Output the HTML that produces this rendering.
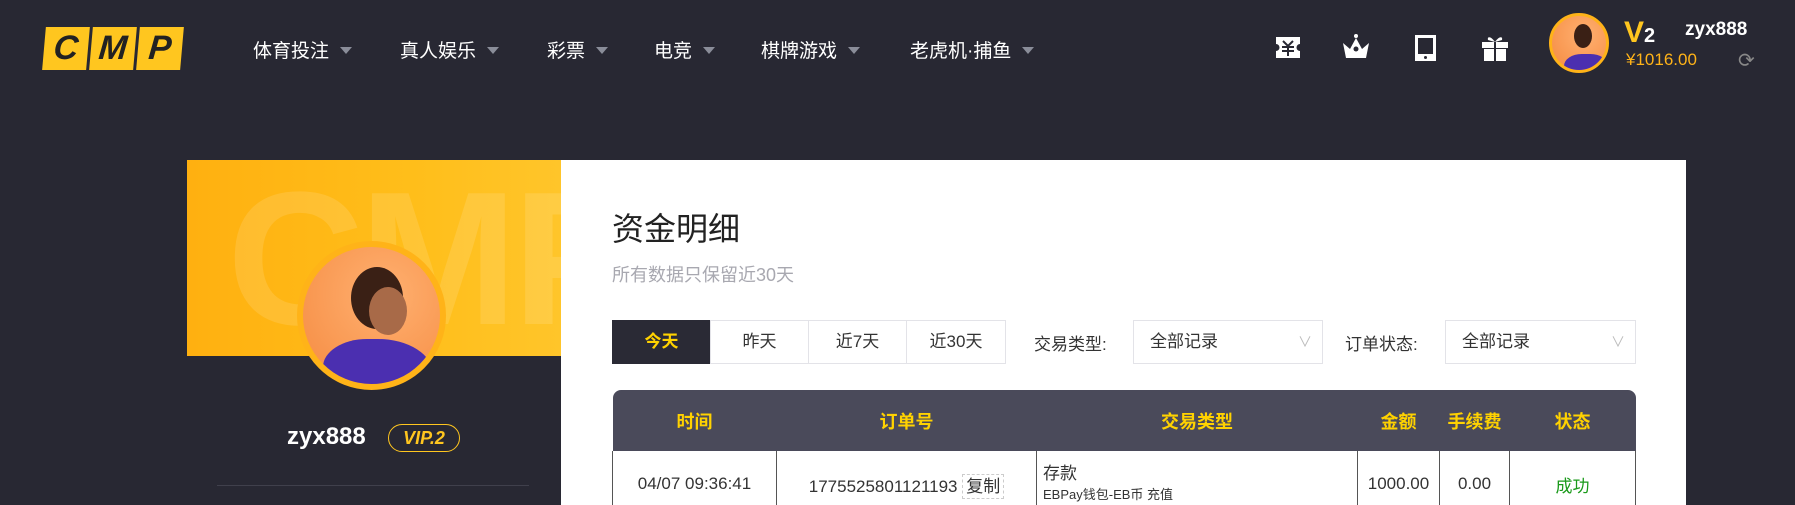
<!DOCTYPE html>
<html style="width:1795px;height:505px;overflow:hidden"><head><meta charset="utf-8"><style>
*{margin:0;padding:0;box-sizing:border-box}
body{width:1795px;height:505px;overflow:hidden;background:#282833;font-family:"Liberation Sans","Noto Sans CJK SC",sans-serif;position:relative}
.a{position:absolute}
.nav{color:#fff;font-size:19px;top:36px;white-space:nowrap}
.nav i{display:inline-block;width:0;height:0;border-left:6px solid transparent;border-right:6px solid transparent;border-top:7px solid #8a8d99;margin-left:11px;vertical-align:3px}
.logo span{display:inline-block;width:44px;height:43px;background:#ffc61f;transform:skewX(-5deg);margin-right:3px;text-align:center;font:italic 900 34px/43px "Liberation Sans",sans-serif;color:#222}
.av{border-radius:50%;background:radial-gradient(circle at 60% 35%,#ffb070,#f58a40);overflow:hidden;border:3px solid #ffb318}
.tab{position:absolute;top:320px;height:44px;width:99px;border:1px solid #e3e3e8;text-align:center;line-height:42px;font-size:17px;color:#333}
.sel{position:absolute;top:320px;height:44px;border:1px solid #e3e3e8;font-size:17px;color:#333;line-height:42px;padding-left:16px}
.sel:after{content:"∨";position:absolute;right:10px;color:#bbb;font-size:14px}
th{color:#ffd200;font-size:18px;font-weight:bold;height:61px}
td{border-left:1px solid #555;border-right:1px solid #555;text-align:center;font-size:17px;color:#333;height:66px}
</style></head><body>
<div class="a logo" style="left:44px;top:27px"><span>C</span><span>M</span><span>P</span></div>
<div class="a nav" style="left:253px">体育投注<i></i></div>
<div class="a nav" style="left:400px">真人娱乐<i></i></div>
<div class="a nav" style="left:547px">彩票<i></i></div>
<div class="a nav" style="left:654px">电竞<i></i></div>
<div class="a nav" style="left:761px">棋牌游戏<i></i></div>
<div class="a nav" style="left:910px">老虎机·捕鱼<i></i></div>
<svg class="a" style="left:1275px;top:34px" width="240" height="28" fill="#fff">
<path d="M1 3h24v7a3 3 0 0 0 0 7v7H1v-7a3 3 0 0 0 0-7z"/><path d="M8 7l5 5 5-5M7 13h12M7 17h12M13 12v10" stroke="#282833" stroke-width="2" fill="none"/>
<g transform="translate(67,0)"><path d="M1 9l7 6 6-11 6 11 7-6-3 15H4z"/><circle cx="14" cy="2" r="2"/><circle cx="14" cy="15" r="2.5" fill="#282833"/></g>
<g transform="translate(140,0)"><path d="M0 1h21v26H0z"/><path d="M3 4h15v16H3z" fill="#282833"/><circle cx="10.5" cy="23.5" r="1.5" fill="#282833"/></g>
<g transform="translate(207,0)"><path d="M0 8h26v6H0zM2 15h22v12H2z"/><path d="M12 8v19h2V8z" fill="#282833"/><path d="M13 8C9 2 5 2 6 6zM13 8c4-6 8-6 7-2z"/></g>
</svg>
<div class="a av" style="left:1549px;top:13px;width:60px;height:60px"><div class="a" style="left:12px;top:38px;width:44px;height:30px;background:#4b2fb0;border-radius:40% 40% 0 0"></div><div class="a" style="left:22px;top:8px;width:18px;height:24px;background:#3a2015;border-radius:50%"></div></div>
<div class="a" style="left:1624px;top:18px;color:#ffc61f;font:bold 30px/30px 'Liberation Sans';">V<span style="color:#fff;font-size:20px">2</span></div>
<div class="a" style="left:1626px;top:50px;color:#ffb318;font-size:17px">¥1016.00</div>
<div class="a" style="left:1685px;top:19px;color:#fff;font:bold 19px 'Liberation Sans'">zyx888</div>
<div class="a" style="left:1738px;top:48px;color:#888;font-size:20px">⟳</div>

<div class="a" style="left:187px;top:160px;width:374px;height:345px;background:#282833"></div>
<div class="a" style="left:187px;top:160px;width:374px;height:196px;background:linear-gradient(90deg,#ffb010,#ffbe1a 60%,#ffc52a);overflow:hidden"><div class="a" style="left:40px;top:-10px;font:bold 190px 'Liberation Sans';color:rgba(255,255,255,.12);letter-spacing:-5px">CMP</div></div>
<div class="a av" style="left:297px;top:241px;width:149px;height:149px;border-width:6px"><div class="a" style="left:20px;top:92px;width:110px;height:70px;background:#4b2fb0;border-radius:40% 50% 0 0"></div><div class="a" style="left:48px;top:20px;width:52px;height:62px;background:#3a2015;border-radius:50%"></div><div class="a" style="left:66px;top:40px;width:38px;height:48px;background:#a86a48;border-radius:50%"></div></div>
<div class="a" style="left:287px;top:423px;color:#fff;font:bold 24px 'Liberation Sans'">zyx888</div>
<div class="a" style="left:388px;top:424px;width:72px;height:28px;border:1px solid #ffc61f;border-radius:14px;color:#ffc61f;font:italic bold 18px/26px 'Liberation Sans';text-align:center">VIP.2</div>
<div class="a" style="left:217px;top:485px;width:312px;height:1px;background:#40404c"></div>

<div class="a" style="left:561px;top:160px;width:1125px;height:345px;background:#fff;overflow:hidden">
<div class="a" style="left:51px;top:44px;font-size:32px;color:#222">资金明细</div>
<div class="a" style="left:51px;top:101px;font-size:18px;color:#a8a8b0">所有数据只保留近30天</div>
<div class="tab" style="left:51px;top:160px;background:#2a2a35;color:#ffd200;font-weight:bold;border-color:#2a2a35">今天</div>
<div class="tab" style="left:149px;top:160px">昨天</div>
<div class="tab" style="left:247px;top:160px">近7天</div>
<div class="tab" style="left:345px;top:160px;width:100px">近30天</div>
<div class="a" style="left:473px;top:170px;font-size:17px;color:#333">交易类型:</div>
<div class="sel" style="left:572px;top:160px;width:190px">全部记录</div>
<div class="a" style="left:784px;top:170px;font-size:17px;color:#333">订单状态:</div>
<div class="sel" style="left:884px;top:160px;width:191px">全部记录</div>
<table class="a" style="left:51px;top:230px;width:1024px;border-collapse:collapse">
<tr style="background:#4a4a5a"><th style="width:164px;border-radius:8px 0 0 0">时间</th><th style="width:260px">订单号</th><th style="width:321px">交易类型</th><th style="width:82px">金额</th><th style="width:70px">手续费</th><th style="border-radius:0 8px 0 0">状态</th></tr>
<tr><td>04/07 09:36:41</td><td>1775525801121193 <span style="border:1px dashed #ccc;padding:2px 3px">复制</span></td><td style="text-align:left;padding-left:6px;vertical-align:top;padding-top:8px">存款<br><span style="font-size:13px">EBPay钱包-EB币 充值</span></td><td>1000.00</td><td>0.00</td><td style="color:#1a9a1a">成功</td></tr>
</table>
</div>
</body></html>
